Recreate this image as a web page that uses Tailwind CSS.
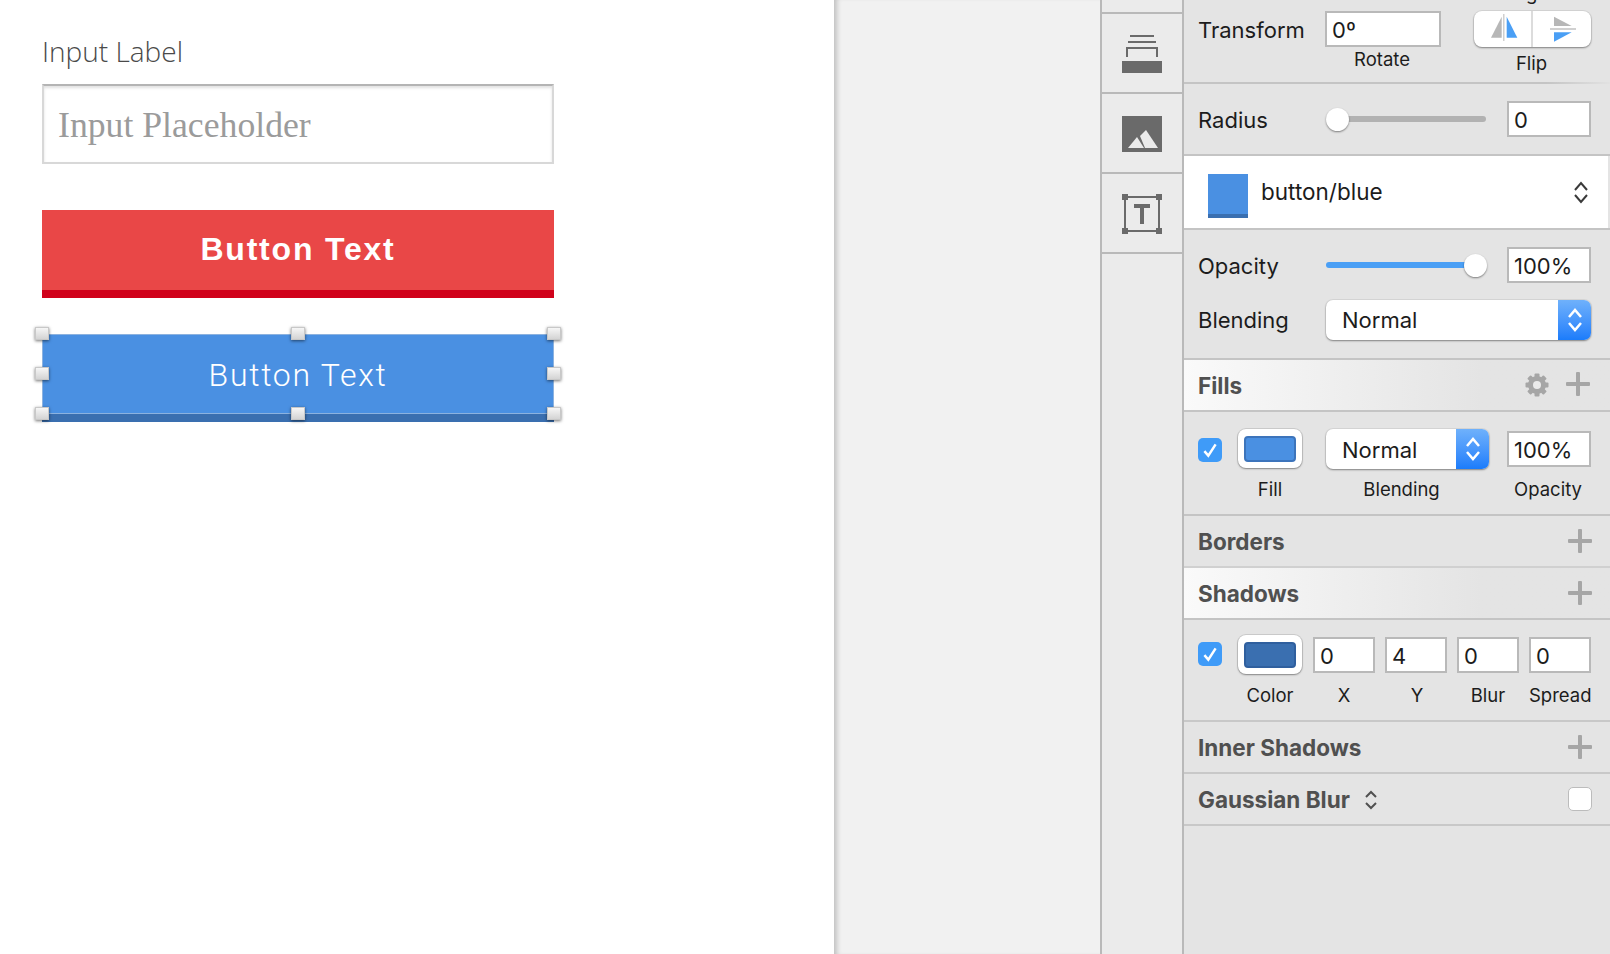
<!DOCTYPE html>
<html lang="en">
<head>
  <meta charset="UTF-8" />
  <title>Button symbol</title>
  <script src="https://cdn.jsdelivr.net/npm/@tailwindcss/browser@4"></script>
</head>
<body class="bg-white overflow-hidden font-['Inter',sans-serif] text-[#1c1c1c]">
<div class="flex w-[1610px] h-[954px] overflow-hidden">

  <!-- CANVAS -->
  <main class="w-[834px] shrink-0 bg-white pl-[42px] pt-[31px]">
    <div class="w-[512px]">
      <p class="font-['Open_Sans',sans-serif] font-light text-[28px] leading-[40px] text-[#4a4a4a]">Input Label</p>
      <div class="mt-[13px] h-[80px] border-2 border-[#d8d8d8] border-t-[#b4b4b4] shadow-[inset_0_2px_3px_rgba(0,0,0,0.12)] flex items-center pl-[14px] pt-[3px] font-['Liberation_Serif',serif] text-[35.7px] text-[#9b9b9b]">Input Placeholder</div>
      <button class="block w-full mt-[46px] h-[88px] bg-[#e94747] border-b-8 border-[#d0021b] text-white font-['Liberation_Sans',sans-serif] font-bold text-[32px] tracking-[1.8px] pb-[3px]">Button Text</button>
      <div class="relative mt-[36px] h-[88px] bg-[#4a90e2] border-b-8 border-[#3a6fb0] flex items-center justify-center">
        <span class="font-['Roboto',sans-serif] font-light text-[32px] tracking-[1.7px] text-white mt-[2px]">Button Text</span>
        <div class="absolute inset-x-0 top-0 h-[80px] border border-[#8cb2df]"></div>
        <div class="absolute left-[-7px] top-[-7px] w-[14px] h-[13px] border border-[#c8c8c8] bg-linear-to-b from-[#f6f6f6] to-[#d4d4d4] shadow-[0_1px_3px_rgba(0,0,0,0.55)]"></div>
        <div class="absolute left-[249px] top-[-7px] w-[14px] h-[13px] border border-[#c8c8c8] bg-linear-to-b from-[#f6f6f6] to-[#d4d4d4] shadow-[0_1px_3px_rgba(0,0,0,0.55)]"></div>
        <div class="absolute left-[505px] top-[-7px] w-[14px] h-[13px] border border-[#c8c8c8] bg-linear-to-b from-[#f6f6f6] to-[#d4d4d4] shadow-[0_1px_3px_rgba(0,0,0,0.55)]"></div>
        <div class="absolute left-[-7px] top-[33px] w-[14px] h-[13px] border border-[#c8c8c8] bg-linear-to-b from-[#f6f6f6] to-[#d4d4d4] shadow-[0_1px_3px_rgba(0,0,0,0.55)]"></div>
        <div class="absolute left-[505px] top-[33px] w-[14px] h-[13px] border border-[#c8c8c8] bg-linear-to-b from-[#f6f6f6] to-[#d4d4d4] shadow-[0_1px_3px_rgba(0,0,0,0.55)]"></div>
        <div class="absolute left-[-7px] top-[73px] w-[14px] h-[13px] border border-[#c8c8c8] bg-linear-to-b from-[#f6f6f6] to-[#d4d4d4] shadow-[0_1px_3px_rgba(0,0,0,0.55)]"></div>
        <div class="absolute left-[249px] top-[73px] w-[14px] h-[13px] border border-[#c8c8c8] bg-linear-to-b from-[#f6f6f6] to-[#d4d4d4] shadow-[0_1px_3px_rgba(0,0,0,0.55)]"></div>
        <div class="absolute left-[505px] top-[73px] w-[14px] h-[13px] border border-[#c8c8c8] bg-linear-to-b from-[#f6f6f6] to-[#d4d4d4] shadow-[0_1px_3px_rgba(0,0,0,0.55)]"></div>
      </div>
    </div>
  </main>

  <!-- EMPTY GREY AREA -->
  <div class="w-[266px] shrink-0 bg-[#f1f1f1] shadow-[inset_6px_0_5px_-3px_rgba(0,0,0,0.2)]"></div>

  <!-- INSERT STRIP -->
  <aside class="w-[84px] shrink-0 bg-[#ebebeb] border-x-2 border-[#b9b9b9] pt-[12px]">
    <div class="h-[2px] bg-[#b9b9b9]"></div>
    <div class="h-[78px] flex justify-center pt-[20px]">
      <svg width="40" height="40" viewBox="0 0 40 40" fill="none">
        <rect x="8" y="1" width="24" height="2" fill="#6a6a6a"/>
        <rect x="6" y="7" width="28" height="2" fill="#6a6a6a"/>
        <path d="M5 23V14H35V23" stroke="#6a6a6a" stroke-width="2"/>
        <rect x="0" y="27" width="40" height="12" fill="#6a6a6a"/>
      </svg>
    </div>
    <div class="h-[2px] bg-[#b9b9b9]"></div>
    <div class="h-[78px] flex justify-center pt-[22px]">
      <svg width="40" height="36" viewBox="0 0 40 36">
        <rect width="40" height="36" fill="#6a6a6a"/>
        <path d="M6 32L15 21L22 32Z" fill="#ebebeb"/>
        <path d="M18 20L24 14L36 32H23Z" fill="#ebebeb"/>
      </svg>
    </div>
    <div class="h-[2px] bg-[#b9b9b9]"></div>
    <div class="h-[78px] flex justify-center pt-[20px]">
      <svg width="40" height="40" viewBox="0 0 40 40" fill="#6a6a6a">
        <rect x="3" y="3" width="34" height="34" fill="none" stroke="#6a6a6a" stroke-width="2"/>
        <rect width="6" height="6"/><rect x="34" width="6" height="6"/><rect y="34" width="6" height="6"/><rect x="34" y="34" width="6" height="6"/>
        <rect x="12" y="10" width="16" height="4"/><rect x="18" y="10" width="4" height="20"/>
      </svg>
    </div>
    <div class="h-[2px] bg-[#b9b9b9]"></div>
  </aside>

  <!-- INSPECTOR -->
  <section class="flex-1 bg-[#e4e4e4] text-[22px]">
    <!-- transform -->
    <div class="h-[82px] pl-[14px] pt-[11px] flex items-start">
      <span class="w-[127px] h-[36px] leading-[38px]">Transform</span>
      <div class="w-[116px]">
        <div class="h-[36px] bg-white border-2 border-[#b9b9b9] pl-[5px] leading-[34px]">0º</div>
        <p class="text-[18.5px] leading-[24px] text-center pr-[2px]">Rotate</p>
      </div>
      <div class="relative ml-[33px] w-[117px]">
        <span class="absolute left-[52px] top-[-30px] text-[18.5px] leading-[24px]">g</span>
        <div class="h-[36px] bg-white rounded-[8px] shadow-[0_0_0_1px_rgba(0,0,0,0.06),0_1px_2px_rgba(0,0,0,0.4)]">
          <svg width="117" height="36" viewBox="0 0 117 36">
            <path d="M27.7 5.7V26.7H17Z" fill="#b7b7b7"/>
            <rect x="29" y="3" width="1.5" height="27" fill="#d0d0d0"/>
            <path d="M32.7 5.7V26.7H43.3Z" fill="#4a9ff5"/>
            <rect x="57" y="0" width="2" height="36" fill="#dcdcdc"/>
            <path d="M80 5.7V15H97.7Z" fill="#b7b7b7"/>
            <rect x="76" y="17" width="26" height="2" fill="#d0d0d0"/>
            <path d="M80 21.3H97.7L80 30.7Z" fill="#4a9ff5"/>
          </svg>
        </div>
        <p class="text-[18.5px] leading-[24px] mt-[4px] pr-[2px] text-center">Flip</p>
      </div>
    </div>
    <div class="h-[2px] bg-linear-to-r from-[#c4c4c4] via-[#c4c4c4] via-85% to-[#e2e2e2]"></div>

    <!-- radius -->
    <div class="h-[70px] pl-[14px] pt-[17px] flex items-start">
      <span class="w-[128px] h-[36px] leading-[38px]">Radius</span>
      <div class="relative w-[160px] h-[36px] flex items-center">
        <div class="w-full h-[6px] rounded-full bg-[#b2b2b2]"></div>
        <div class="absolute left-0 top-[7px] w-[23px] h-[23px] rounded-full bg-white shadow-[0_1px_2px_rgba(0,0,0,0.45)]"></div>
      </div>
      <div class="ml-[21px] w-[84px] h-[36px] bg-white border-2 border-[#b9b9b9] pl-[5px] leading-[34px]">0</div>
    </div>
    <div class="h-[2px] bg-[#c4c4c4]"></div>

    <!-- shared style -->
    <div class="h-[72px] w-[424px] bg-white pl-[24px] flex items-center">
      <div class="w-[40px] h-[44px] bg-[#4a90e2] border-b-4 border-[#3a6fb0] mt-[8px]"></div>
      <span class="ml-[13px] text-[22.5px]">button/blue</span>
      <svg class="ml-auto mr-[20px]" width="14" height="23" viewBox="0 0 14 23" fill="none" stroke="#3a3a3a" stroke-width="2">
        <path d="M1 9L7 2L13 9M1 14L7 21L13 14"/>
      </svg>
    </div>
    <div class="h-[2px] bg-[#c4c4c4]"></div>

    <!-- opacity / blending -->
    <div class="h-[128px] pl-[14px] pt-[17px]">
      <div class="flex items-start">
        <span class="w-[128px] h-[36px] leading-[38px]">Opacity</span>
        <div class="relative w-[160px] h-[36px] flex items-center">
          <div class="w-full h-[6px] rounded-full bg-[#4a9ff5]"></div>
          <div class="absolute right-[-1px] top-[7px] w-[23px] h-[23px] rounded-full bg-white shadow-[0_1px_2px_rgba(0,0,0,0.45)]"></div>
        </div>
        <div class="ml-[21px] w-[84px] h-[36px] bg-white border-2 border-[#b9b9b9] pl-[5px] leading-[34px]">100%</div>
      </div>
      <div class="flex items-start mt-[17px]">
        <span class="w-[128px] h-[40px] leading-[40px]">Blending</span>
        <div class="w-[265px] h-[40px] bg-white rounded-[7px] shadow-[0_0_0_1px_rgba(0,0,0,0.05),0_1px_2px_rgba(0,0,0,0.4)] flex overflow-hidden">
          <span class="flex-1 pl-[16px] leading-[40px]">Normal</span>
          <div class="w-[33px] bg-linear-to-b from-[#6fb1fb] to-[#1a7cfb] flex items-center justify-center">
            <svg width="16" height="26" viewBox="0 0 16 26" fill="none" stroke="white" stroke-width="2.5"><path d="M2 10L8 3L14 10M2 16L8 23L14 16"/></svg>
          </div>
        </div>
      </div>
    </div>
    <div class="h-[2px] bg-[#c4c4c4]"></div>

    <!-- fills -->
    <div class="h-[50px] pl-[14px] pr-[18px] flex items-center bg-linear-to-r from-[#fafafa] to-[#e4e4e4] to-70%">
      <span class="font-bold text-[22.5px] text-[#505050] mt-[2px]">Fills</span>
      <svg class="ml-auto" width="24" height="24" viewBox="0 0 24 24" fill="#a6a6a6">
        <circle cx="12" cy="12" r="6.5" fill="none" stroke="#a6a6a6" stroke-width="5"/>
        <rect x="9.5" y="0.5" width="5" height="23" rx="1"/>
        <rect x="9.5" y="0.5" width="5" height="23" rx="1" transform="rotate(45 12 12)"/>
        <rect x="9.5" y="0.5" width="5" height="23" rx="1" transform="rotate(90 12 12)"/>
        <rect x="9.5" y="0.5" width="5" height="23" rx="1" transform="rotate(135 12 12)"/>
        <circle cx="12" cy="12" r="4" fill="#eaeaea"/>
      </svg>
      <svg class="ml-[17px] mb-[2px] mr-[2px]" width="24" height="24" viewBox="0 0 24 24" fill="#a6a6a6"><rect x="10" width="4" height="24" rx="1"/><rect y="10" width="24" height="4" rx="1"/></svg>
    </div>
    <div class="h-[2px] bg-[#c4c4c4]"></div>
    <div class="h-[102px] pl-[14px] pt-[17px] flex items-start">
      <div class="mt-[9px] w-[24px] h-[24px] rounded-[5px] bg-[#3f9bf8] flex items-center justify-center">
        <svg width="18" height="18" viewBox="0 0 16 16" fill="none" stroke="white" stroke-width="2.2"><path d="M3 9L6.5 13L13 3"/></svg>
      </div>
      <div class="ml-[16px] w-[64px]">
        <div class="h-[39px] px-[6px] pt-[7px] bg-white rounded-[8px] shadow-[0_0_0_1px_rgba(0,0,0,0.1),0_1px_2px_rgba(0,0,0,0.35)]">
          <div class="h-[26px] rounded-[4px] bg-[#4a90e2] border-2 border-[#3c74bb]"></div>
        </div>
        <p class="text-[18.5px] leading-[24px] mt-[9px] text-center">Fill</p>
      </div>
      <div class="ml-[24px] w-[163px]">
        <div class="h-[40px] bg-white rounded-[7px] shadow-[0_0_0_1px_rgba(0,0,0,0.05),0_1px_2px_rgba(0,0,0,0.4)] flex overflow-hidden">
          <span class="flex-1 pl-[16px] leading-[42px]">Normal</span>
          <div class="w-[33px] bg-linear-to-b from-[#6fb1fb] to-[#1a7cfb] flex items-center justify-center">
            <svg width="16" height="26" viewBox="0 0 16 26" fill="none" stroke="white" stroke-width="2.5"><path d="M2 10L8 3L14 10M2 16L8 23L14 16"/></svg>
          </div>
        </div>
        <p class="text-[18.5px] leading-[24px] mt-[8px] text-center pr-[12px]">Blending</p>
      </div>
      <div class="ml-[18px] w-[84px] pt-[2px]">
        <div class="h-[36px] bg-white border-2 border-[#b9b9b9] pl-[5px] leading-[34px]">100%</div>
        <p class="text-[18.5px] leading-[24px] mt-[10px] pr-[2px] text-center">Opacity</p>
      </div>
    </div>
    <div class="h-[2px] bg-[#c4c4c4]"></div>

    <!-- borders -->
    <div class="h-[50px] pl-[14px] pr-[18px] flex items-center">
      <span class="font-bold text-[22.5px] text-[#505050] mt-[2px]">Borders</span>
      <svg class="ml-auto" width="24" height="24" viewBox="0 0 24 24" fill="#a6a6a6"><rect x="10" width="4" height="24" rx="1"/><rect y="10" width="24" height="4" rx="1"/></svg>
    </div>
    <div class="h-[2px] bg-[#d0d0d0]"></div>

    <!-- shadows -->
    <div class="h-[50px] pl-[14px] pr-[18px] flex items-center bg-linear-to-r from-[#fafafa] to-[#e4e4e4] to-70%">
      <span class="font-bold text-[22.5px] text-[#505050] mt-[2px]">Shadows</span>
      <svg class="ml-auto" width="24" height="24" viewBox="0 0 24 24" fill="#a6a6a6"><rect x="10" width="4" height="24" rx="1"/><rect y="10" width="24" height="4" rx="1"/></svg>
    </div>
    <div class="h-[2px] bg-[#c4c4c4]"></div>
    <div class="h-[100px] pl-[14px] pt-[15px] flex items-start">
      <div class="mt-[7px] w-[24px] h-[24px] rounded-[5px] bg-[#3f9bf8] flex items-center justify-center">
        <svg width="18" height="18" viewBox="0 0 16 16" fill="none" stroke="white" stroke-width="2.2"><path d="M3 9L6.5 13L13 3"/></svg>
      </div>
      <div class="ml-[16px] w-[64px]">
        <div class="h-[39px] px-[6px] pt-[7px] bg-white rounded-[8px] shadow-[0_0_0_1px_rgba(0,0,0,0.1),0_1px_2px_rgba(0,0,0,0.35)]">
          <div class="h-[26px] rounded-[4px] bg-[#3a6fb0] border-2 border-[#2f5f9e]"></div>
        </div>
        <p class="text-[18.5px] leading-[24px] mt-[9px] text-center">Color</p>
      </div>
      <div class="ml-[11px] w-[62px] pt-[2px]">
        <div class="h-[36px] bg-white border-2 border-[#b9b9b9] pl-[5px] leading-[34px]">0</div>
        <p class="text-[18.5px] leading-[24px] mt-[10px] text-center">X</p>
      </div>
      <div class="ml-[10px] w-[62px] pt-[2px]">
        <div class="h-[36px] bg-white border-2 border-[#b9b9b9] pl-[5px] leading-[34px]">4</div>
        <p class="text-[18.5px] leading-[24px] mt-[10px] pl-[2px] text-center">Y</p>
      </div>
      <div class="ml-[10px] w-[62px] pt-[2px]">
        <div class="h-[36px] bg-white border-2 border-[#b9b9b9] pl-[5px] leading-[34px]">0</div>
        <p class="text-[18.5px] leading-[24px] mt-[10px] text-center">Blur</p>
      </div>
      <div class="ml-[10px] w-[62px] pt-[2px]">
        <div class="h-[36px] bg-white border-2 border-[#b9b9b9] pl-[5px] leading-[34px]">0</div>
        <p class="text-[18.5px] leading-[24px] mt-[10px] whitespace-nowrap text-center">Spread</p>
      </div>
    </div>
    <div class="h-[2px] bg-[#c8c8c8]"></div>

    <!-- inner shadows -->
    <div class="h-[50px] pl-[14px] pr-[18px] flex items-center">
      <span class="font-bold text-[22.5px] text-[#505050] mt-[2px]">Inner Shadows</span>
      <svg class="ml-auto" width="24" height="24" viewBox="0 0 24 24" fill="#a6a6a6"><rect x="10" width="4" height="24" rx="1"/><rect y="10" width="24" height="4" rx="1"/></svg>
    </div>
    <div class="h-[2px] bg-[#c8c8c8]"></div>

    <!-- gaussian blur -->
    <div class="h-[50px] pl-[14px] pr-[18px] flex items-center">
      <span class="font-bold text-[22.5px] text-[#505050] mt-[2px]">Gaussian Blur</span>
      <svg class="ml-[14px] mt-[2px]" width="14" height="20" viewBox="0 0 14 20" fill="none" stroke="#505050" stroke-width="2"><path d="M2 7L7 2L12 7M2 13L7 18L12 13"/></svg>
      <div class="ml-auto w-[24px] h-[24px] rounded-[5px] bg-white border border-[#bcbcbc]"></div>
    </div>
    <div class="h-[2px] bg-[#c8c8c8]"></div>
  </section>
</div>
</body>
</html>
